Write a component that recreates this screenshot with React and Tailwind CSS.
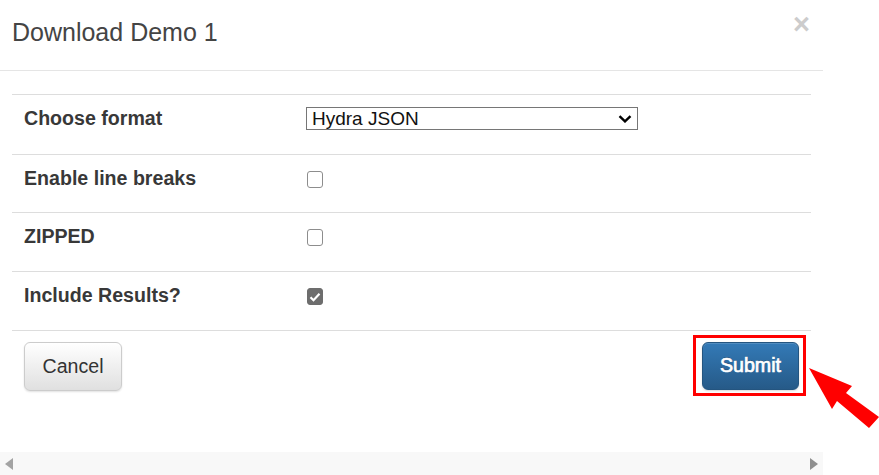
import React from 'react';

const rows = [
  { label: 'Choose format', type: 'select', h: 'h-[60px]' },
  { label: 'Enable line breaks', type: 'check', checked: false, h: 'h-[58px]' },
  { label: 'ZIPPED', type: 'check', checked: false, h: 'h-[59px]' },
  { label: 'Include Results?', type: 'check', checked: true, h: 'h-[59px]' },
];

const Checkbox = ({ checked }) => (
  <span
    className={
      'ml-[1px] flex w-[16px] h-[17px] items-center justify-center rounded-[3px] border ' +
      (checked ? 'bg-[#6d6d6d] border-[#6d6d6d]' : 'bg-white border-[#8d8d8d]')
    }
  >
    {checked && (
      <svg width="12" height="10" viewBox="0 0 12 10">
        <path d="M1.5 5.2 L4.5 8.2 L10.5 1.8" fill="none" stroke="#fff" strokeWidth="2.2" />
      </svg>
    )}
  </span>
);

const FormatSelect = () => (
  <div className="relative w-[332px] h-[23px]">
    <select
      defaultValue="hydra"
      className="appearance-none w-full h-full border border-[#767676] bg-white pl-[5px] text-[19px] leading-[21px] text-[#111] outline-none"
    >
      <option value="hydra">Hydra JSON</option>
    </select>
    <svg className="absolute right-[6px] top-[8px] pointer-events-none" width="14" height="8" viewBox="0 0 14 8">
      <path d="M1.5 1.2 L7 6.4 L12.5 1.2" fill="none" stroke="#000" strokeWidth="2.4" />
    </svg>
  </div>
);

export default function App() {
  return (
    <div className="relative w-[879px] h-[475px] overflow-hidden bg-white text-[#333] font-['Liberation_Sans',Arial,sans-serif]">
      <div className="flex flex-col w-[823px] h-full">
        {/* header */}
        <div className="flex items-start justify-between h-[71px] border-b border-[#e5e5e5] pl-[12px] pr-[13px]">
          <h4 className="mt-[14px] text-[25px] leading-[36px] font-normal text-[#444]">Download Demo 1</h4>
          <button className="mt-[10px] text-[29px] leading-none font-bold text-[#cccccc]">×</button>
        </div>

        {/* body */}
        <div className="px-[12px] pt-[23px]">
          <div className="border-b border-[#dddddd]">
            {rows.map((row) => (
              <div key={row.label} className={'grid grid-cols-[282px_1fr] border-t border-[#dddddd] ' + row.h}>
                <div className="pl-[12px] pt-[9px] text-[19.6px] leading-[28px] font-bold text-[#383838]">{row.label}</div>
                <div className={'pl-[12px] ' + (row.type === 'select' ? 'pt-[12px]' : 'pt-[16px]')}>
                  {row.type === 'select' ? <FormatSelect /> : <Checkbox checked={row.checked} />}
                </div>
              </div>
            ))}
          </div>

          <div className="flex items-start justify-between">
            <button className="mt-[11px] ml-[12px] w-[98px] h-[49px] rounded-[6px] border border-[#cccccc] bg-linear-to-b from-white to-[#e0e0e0] shadow-[inset_0_1px_0_rgba(255,255,255,0.15),0_1px_2px_rgba(0,0,0,0.12)] text-[19.6px] text-[#333]">
              Cancel
            </button>
            <div className="mt-[4px] mr-[5px] border-[3px] border-[#ff0000] pt-[4px] pl-[6px] pr-[4px] pb-[3px]">
              <button className="w-[97px] h-[48px] rounded-[6px] border border-[#245580] bg-linear-to-b from-[#337ab7] to-[#265a88] shadow-[inset_0_1px_0_rgba(255,255,255,0.15),0_1px_2px_rgba(0,0,0,0.15)] text-[19.6px] font-normal text-white [-webkit-text-stroke:0.7px_#fff] [text-shadow:0_-1px_0_rgba(0,0,0,0.25)]">
                Submit
              </button>
            </div>
          </div>
        </div>

        <div className="flex-1" />

        {/* horizontal scrollbar */}
        <div className="flex items-center justify-between h-[23px] bg-[#f8f8f8] pl-[5px] pr-[5px]">
          <svg width="8" height="12" viewBox="0 0 8 12">
            <path d="M8 0 L0 6 L8 12 Z" fill="#a3a3a3" />
          </svg>
          <svg width="8" height="12" viewBox="0 0 8 12">
            <path d="M0 0 L8 6 L0 12 Z" fill="#8f8f8f" />
          </svg>
        </div>
      </div>

      {/* annotation arrow */}
      <svg className="absolute left-0 top-0 pointer-events-none" width="879" height="475">
        <polygon points="809,368 852,386 846,393 879,417 869,428 837,401 832,409" fill="#ff0000" />
      </svg>
    </div>
  );
}
